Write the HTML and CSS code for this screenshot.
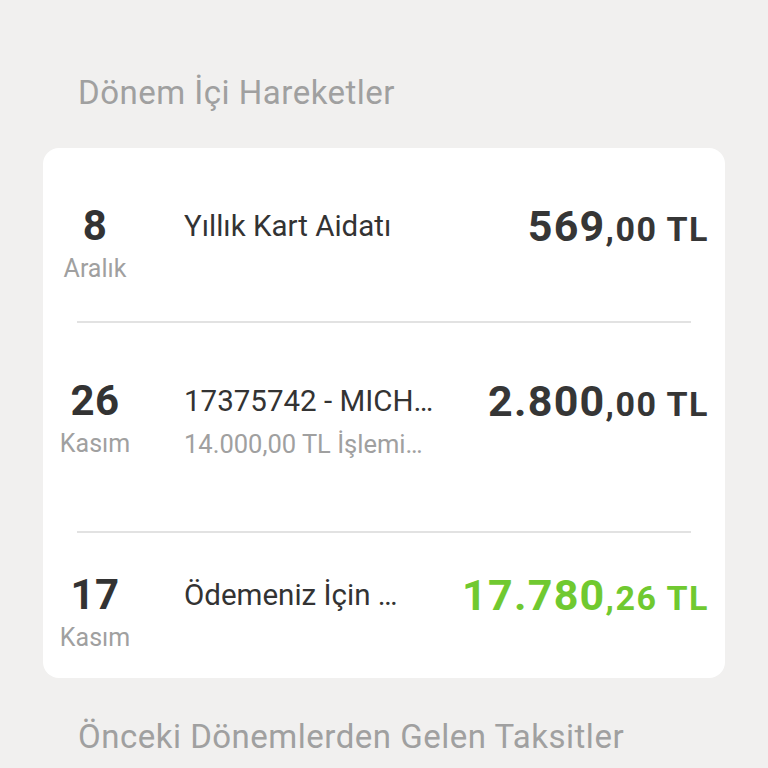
FILE: index.html
```html
<!DOCTYPE html>
<html lang="tr">
<head>
    <meta charset="UTF-8">
    <meta name="viewport" content="width=device-width, initial-scale=1.0">
    <title>Dönem İçi Hareketler</title>
    <link rel="stylesheet" href="styles.css">
</head>
<body>
    <div class="page">
        <div class="section-title">Dönem İçi Hareketler</div>

        <div class="card">
            <div class="tx-row first">
                <div class="tx-date">
                    <div class="tx-day">8</div>
                    <div class="tx-month">Aralık</div>
                </div>
                <div class="tx-info">
                    <div class="tx-name">Yıllık Kart Aidatı</div>
                </div>
                <div class="tx-amount"><span class="amount-int">569</span><span class="amount-dec">,00 TL</span></div>
            </div>
            <div class="divider"></div>

            <div class="tx-row second">
                <div class="tx-date">
                    <div class="tx-day">26</div>
                    <div class="tx-month">Kasım</div>
                </div>
                <div class="tx-info">
                    <div class="tx-name">17375742 - MICH…</div>
                    <div class="tx-sub">14.000,00 TL İşlemi…</div>
                </div>
                <div class="tx-amount"><span class="amount-int">2.800</span><span class="amount-dec">,00 TL</span></div>
            </div>
            <div class="divider"></div>

            <div class="tx-row last">
                <div class="tx-date">
                    <div class="tx-day">17</div>
                    <div class="tx-month">Kasım</div>
                </div>
                <div class="tx-info">
                    <div class="tx-name">Ödemeniz İçin …</div>
                </div>
                <div class="tx-amount income"><span class="amount-int">17.780</span><span class="amount-dec">,26 TL</span></div>
            </div>
        </div>

        <div class="section-title bottom">Önceki Dönemlerden Gelen Taksitler</div>
    </div>
</body>
</html>
```

FILE: styles.css
```css
:root {
    --bg: #f1f0ef;
    --card: #fff;
    --text: #333;
    --muted: #a0a0a0;
    --line: #e2e2e2;
    --green: #70c930;
}

body {
    margin: 0;
    padding: 0;
    background: var(--bg);
    font-family: Roboto, "Noto Sans", sans-serif;
    color: var(--text);
    height: 768px;
    overflow: hidden;
}

.page {
    padding: 73px 43px 0 43px;
}

.section-title {
    padding-left: 35px;
    font-size: 33px;
    letter-spacing: 0.5px;
    line-height: 40px;
    color: var(--muted);
    margin-bottom: 35px;
}

.section-title.bottom {
    margin-top: 39px;
    margin-bottom: 0;
}

.card {
    background: var(--card);
    border-radius: 16px;
}

.tx-row {
    display: flex;
    align-items: flex-start;
    padding-right: 16px;
}

.tx-row.first {
    padding-top: 55px;
    padding-bottom: 32px;
}

.tx-row.second {
    padding-top: 55px;
    padding-bottom: 67px;
}

.tx-row.last {
    padding-top: 39px;
    padding-bottom: 20px;
}

.tx-date {
    width: 104px;
    text-align: center;
    flex-shrink: 0;
}

.tx-day {
    font-size: 42px;
    letter-spacing: 0.5px;
    line-height: 46px;
    font-weight: 700;
}

.tx-month {
    font-size: 25px;
    line-height: 40px;
    color: var(--muted);
}

.tx-info {
    width: 262px;
    margin-left: 37px;
    flex-shrink: 0;
    white-space: nowrap;
    overflow: hidden;
}

.tx-name {
    font-size: 29.5px;
    line-height: 46px;
}

.tx-sub {
    font-size: 25.5px;
    line-height: 40px;
    color: var(--muted);
}

.tx-amount {
    flex: 1;
    text-align: right;
    line-height: 46px;
    font-weight: 700;
    white-space: nowrap;
    color: #363636;
}

.amount-int {
    font-size: 43px;
    letter-spacing: 1.3px;
}

.amount-dec {
    font-size: 34px;
    letter-spacing: 1.5px;
}

.tx-amount.income {
    color: var(--green);
}

.divider {
    height: 2px;
    background: var(--line);
    margin: 0 34px;
}
```
